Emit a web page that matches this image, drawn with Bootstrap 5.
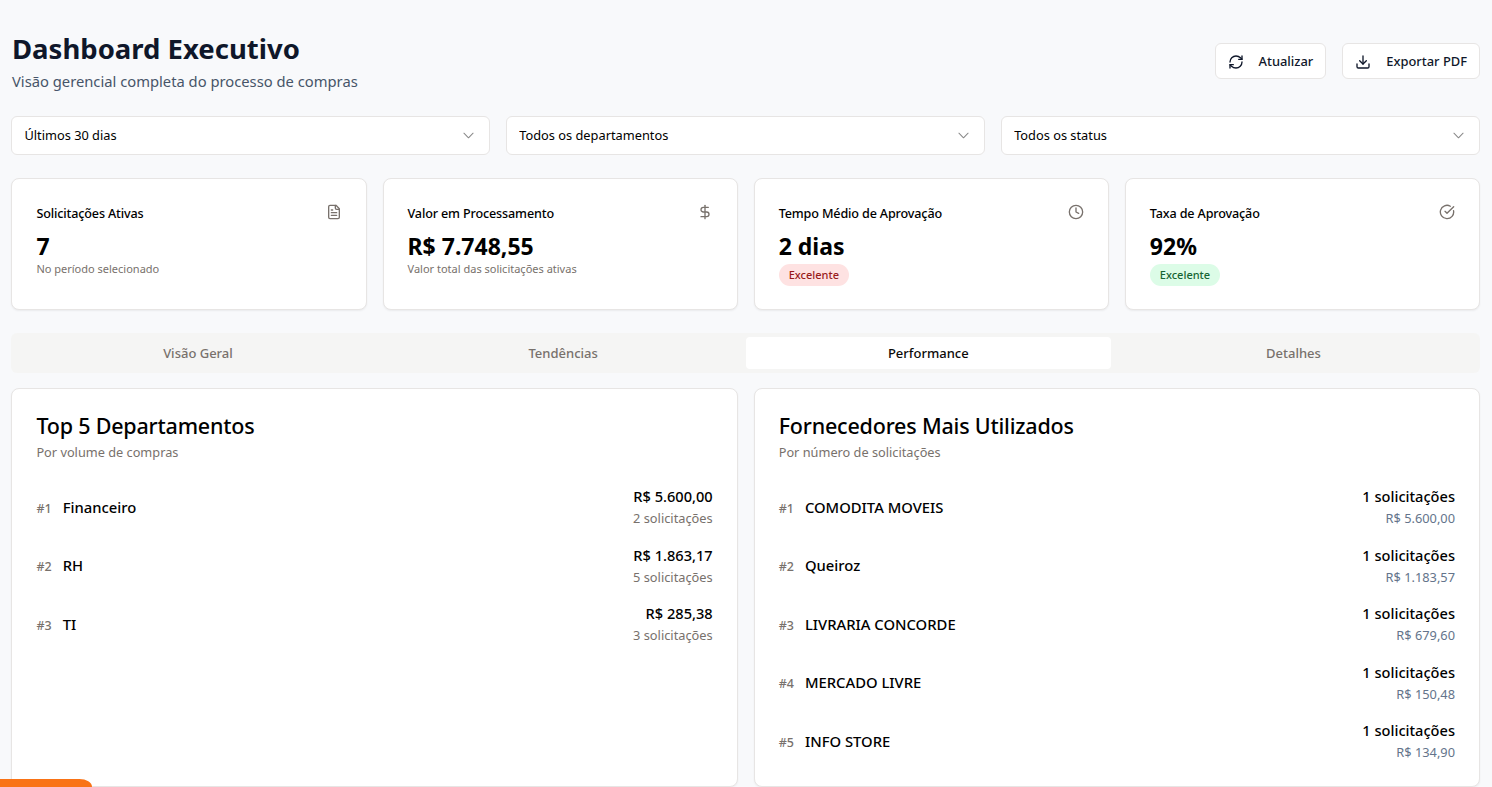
<!DOCTYPE html>
<html lang="pt-BR">
<head>
    <meta charset="UTF-8">
    <meta name="viewport" content="width=device-width, initial-scale=1.0">
    <title>Dashboard Executivo</title>
    <link href="https://cdn.jsdelivr.net/npm/bootstrap@5.3.0/dist/css/bootstrap.min.css" rel="stylesheet">
    <script src="https://cdn.jsdelivr.net/npm/bootstrap@5.3.0/dist/js/bootstrap.bundle.min.js"></script>
    <style>
        body {
            background: #f8f9fb;
            color: #000;
            font-family: "Noto Sans", "Open Sans", sans-serif;
            font-size: 14px;
        }
        .page-wrap { padding: 24px 12px 0 11.4px; }
        .page-title { font-size: 27.5px; font-weight: 700; line-height: 36px; color: #0f172a; margin: 7px 0 0 .6px; }
        .page-sub { font-size: 14.75px; line-height: 24px; color: #475569; margin: 2px 0 0 .6px; }
        .top-btn {
            height: 36px; padding: 1px 12px 0; gap: 15px;
            background: #fff; border: 1px solid #e7e5e4; border-radius: 6px;
            font-size: 12.9px; font-weight: 500; color: #0f172a;
        }
        .filter-row { margin-top: 23px; gap: 16px; }
        .filter-select {
            height: 39px; padding: 0 40px 0 12px; font-size: 12.8px; color: #000;
            border: 1px solid #e7e5e4; border-radius: 6px;
            background-size: 11px 11px; background-position: right 15px center;
            background-image: url("data:image/svg+xml,%3csvg xmlns='http://www.w3.org/2000/svg' viewBox='0 0 24 24' fill='none' stroke='%23888' stroke-width='2.2' stroke-linecap='round' stroke-linejoin='round'%3e%3cpath d='m2 7 10 10L22 7'/%3e%3c/svg%3e");
        }
        .stat-grid { display: grid; grid-template-columns: repeat(4, 1fr); gap: 16px; margin-top: 23px; }
        .stat-box {
            height: 132px; padding: 25px 24px 0; border: 1px solid #e7e5e4; border-radius: 8px;
            box-shadow: 0 1px 2px rgba(0,0,0,.06);
        }
        .stat-label { font-size: 12.6px; font-weight: 500; line-height: 20px; letter-spacing: -.15px; }
        .stat-icon { width: 16px; height: 16px; color: #78716c; }
        .stat-value { font-size: 23px; font-weight: 700; line-height: 28px; margin: 8px 0 1px; }
        .stat-note { font-size: 11px; line-height: 16px; color: #78716c; }
        .pill-tag { display: inline-block; font-size: 11px; font-weight: 500; line-height: 16px; padding: 3px 10px; border-radius: 999px; margin-top: 3px; }
        .pill-red { background: #fee2e2; color: #991b1b; }
        .pill-green { background: #dcfce7; color: #166534; }
        .tab-strip { margin-top: 23px; padding: 4px; background: #f5f5f4; border-radius: 6px; height: 40px; }
        .tab-strip .nav-link {
            padding: 1px 0 0; height: 32px; line-height: 31px; border-radius: 4px;
            font-size: 13px; font-weight: 500; color: #78716c;
        }
        .tab-strip .nav-link.active { background: #fff; color: #0c0a09; }
        .panel-grid { display: grid; grid-template-columns: 1fr 1fr; gap: 16px; margin-top: 15px; }
        .panel-box { padding: 23px 24px 24px; border: 1px solid #e7e5e4; border-radius: 8px; box-shadow: 0 1px 2px rgba(0,0,0,.05); }
        .panel-title { font-size: 21.5px; font-weight: 500; line-height: 28px; margin: 0 0 2px; letter-spacing: -.2px; }
        .panel-sub { font-size: 12.75px; line-height: 20px; color: #78716c; }
        .rank-list { margin-top: 24px; gap: 16.5px; }
        .rank-num { font-size: 12.5px; font-weight: 500; color: #78716c; margin-right: 11px; }
        .rank-name { font-size: 14.8px; font-weight: 500; }
        .rank-main { font-size: 14.6px; font-weight: 500; line-height: 20px; }
        .rank-dim { font-size: 12.8px; line-height: 20px; color: #78716c; margin-top: 2px; }
        .rank-slate { font-size: 12.8px; line-height: 20px; color: #64748b; margin-top: 2px; }
        .orange-tab {
            position: fixed; left: -20px; bottom: 0; width: 112px; height: 8px;
            background: #f97316; border-radius: 22px 22px 0 0 / 14px 14px 0 0;
        }
        svg.ico { fill: none; stroke: currentColor; stroke-width: 2; stroke-linecap: round; stroke-linejoin: round; }
    </style>
</head>
<body>
    <div class="page-wrap">
        <!-- cabecalho -->
        <div class="d-flex justify-content-between align-items-start">
            <div>
                <h1 class="page-title">Dashboard Executivo</h1>
                <p class="page-sub">Visão gerencial completa do processo de compras</p>
            </div>
            <div class="d-flex gap-3" style="margin-top:19px">
                <button class="btn top-btn d-flex align-items-center" type="button">
                    <svg class="ico" width="16" height="16" viewBox="0 0 24 24"><path d="M3 12a9 9 0 0 1 9-9 9.75 9.75 0 0 1 6.74 2.74L21 8"/><path d="M21 3v5h-5"/><path d="M21 12a9 9 0 0 1-9 9 9.75 9.75 0 0 1-6.74-2.74L3 16"/><path d="M8 16H3v5"/></svg>
                    Atualizar
                </button>
                <button class="btn top-btn d-flex align-items-center" type="button">
                    <svg class="ico" width="16" height="16" viewBox="0 0 24 24"><path d="M21 15v4a2 2 0 0 1-2 2H5a2 2 0 0 1-2-2v-4"/><polyline points="7 10 12 15 17 10"/><line x1="12" y1="15" x2="12" y2="3"/></svg>
                    Exportar PDF
                </button>
            </div>
        </div>

        <!-- filtros -->
        <div class="d-flex filter-row">
            <select class="form-select filter-select"><option>Últimos 30 dias</option></select>
            <select class="form-select filter-select"><option>Todos os departamentos</option></select>
            <select class="form-select filter-select"><option>Todos os status</option></select>
        </div>

        <!-- indicadores -->
        <div class="stat-grid">
            <div class="card stat-box">
                <div class="d-flex justify-content-between align-items-start">
                    <span class="stat-label">Solicitações Ativas</span>
                    <svg class="ico stat-icon" viewBox="0 0 24 24"><path d="M15 2H6a2 2 0 0 0-2 2v16a2 2 0 0 0 2 2h12a2 2 0 0 0 2-2V7Z"/><path d="M14 2v4a2 2 0 0 0 2 2h4"/><path d="M10 9H8"/><path d="M16 13H8"/><path d="M16 17H8"/></svg>
                </div>
                <div class="stat-value">7</div>
                <div class="stat-note">No período selecionado</div>
            </div>
            <div class="card stat-box">
                <div class="d-flex justify-content-between align-items-start">
                    <span class="stat-label">Valor em Processamento</span>
                    <svg class="ico stat-icon" viewBox="0 0 24 24"><line x1="12" y1="2" x2="12" y2="22"/><path d="M17 5H9.5a3.5 3.5 0 0 0 0 7h5a3.5 3.5 0 0 1 0 7H6"/></svg>
                </div>
                <div class="stat-value">R$ 7.748,55</div>
                <div class="stat-note">Valor total das solicitações ativas</div>
            </div>
            <div class="card stat-box">
                <div class="d-flex justify-content-between align-items-start">
                    <span class="stat-label">Tempo Médio de Aprovação</span>
                    <svg class="ico stat-icon" viewBox="0 0 24 24"><circle cx="12" cy="12" r="10"/><polyline points="12 6 12 12 16 14"/></svg>
                </div>
                <div class="stat-value">2 dias</div>
                <div><span class="pill-tag pill-red">Excelente</span></div>
            </div>
            <div class="card stat-box">
                <div class="d-flex justify-content-between align-items-start">
                    <span class="stat-label">Taxa de Aprovação</span>
                    <svg class="ico stat-icon" viewBox="0 0 24 24"><path d="M21.801 10A10 10 0 1 1 17 3.335"/><path d="m9 11 3 3L22 4"/></svg>
                </div>
                <div class="stat-value">92%</div>
                <div><span class="pill-tag pill-green">Excelente</span></div>
            </div>
        </div>

        <!-- abas -->
        <ul class="nav nav-pills nav-justified tab-strip">
            <li class="nav-item"><a class="nav-link" href="#">Visão Geral</a></li>
            <li class="nav-item"><a class="nav-link" href="#">Tendências</a></li>
            <li class="nav-item"><a class="nav-link active" href="#">Performance</a></li>
            <li class="nav-item"><a class="nav-link" href="#">Detalhes</a></li>
        </ul>

        <div class="panel-grid">
            <div class="card panel-box">
                <h2 class="panel-title">Top 5 Departamentos</h2>
                <div class="panel-sub">Por volume de compras</div>
                <div class="rank-list d-flex flex-column">
                    <div class="d-flex justify-content-between align-items-center">
                        <div><span class="rank-num">#1</span><span class="rank-name">Financeiro</span></div>
                        <div class="text-end"><div class="rank-main">R$ 5.600,00</div><div class="rank-dim">2 solicitações</div></div>
                    </div>
                    <div class="d-flex justify-content-between align-items-center">
                        <div><span class="rank-num">#2</span><span class="rank-name">RH</span></div>
                        <div class="text-end"><div class="rank-main">R$ 1.863,17</div><div class="rank-dim">5 solicitações</div></div>
                    </div>
                    <div class="d-flex justify-content-between align-items-center">
                        <div><span class="rank-num">#3</span><span class="rank-name">TI</span></div>
                        <div class="text-end"><div class="rank-main">R$ 285,38</div><div class="rank-dim">3 solicitações</div></div>
                    </div>
                </div>
            </div>
            <div class="card panel-box">
                <h2 class="panel-title">Fornecedores Mais Utilizados</h2>
                <div class="panel-sub">Por número de solicitações</div>
                <div class="rank-list d-flex flex-column">
                    <div class="d-flex justify-content-between align-items-center">
                        <div><span class="rank-num">#1</span><span class="rank-name">COMODITA MOVEIS</span></div>
                        <div class="text-end"><div class="rank-main">1 solicitações</div><div class="rank-slate">R$ 5.600,00</div></div>
                    </div>
                    <div class="d-flex justify-content-between align-items-center">
                        <div><span class="rank-num">#2</span><span class="rank-name">Queiroz</span></div>
                        <div class="text-end"><div class="rank-main">1 solicitações</div><div class="rank-slate">R$ 1.183,57</div></div>
                    </div>
                    <div class="d-flex justify-content-between align-items-center">
                        <div><span class="rank-num">#3</span><span class="rank-name">LIVRARIA CONCORDE</span></div>
                        <div class="text-end"><div class="rank-main">1 solicitações</div><div class="rank-slate">R$ 679,60</div></div>
                    </div>
                    <div class="d-flex justify-content-between align-items-center">
                        <div><span class="rank-num">#4</span><span class="rank-name">MERCADO LIVRE</span></div>
                        <div class="text-end"><div class="rank-main">1 solicitações</div><div class="rank-slate">R$ 150,48</div></div>
                    </div>
                    <div class="d-flex justify-content-between align-items-center">
                        <div><span class="rank-num">#5</span><span class="rank-name">INFO STORE</span></div>
                        <div class="text-end"><div class="rank-main">1 solicitações</div><div class="rank-slate">R$ 134,90</div></div>
                    </div>
                </div>
            </div>
        </div>
    </div>
    <div class="orange-tab"></div>
</body>
</html>
